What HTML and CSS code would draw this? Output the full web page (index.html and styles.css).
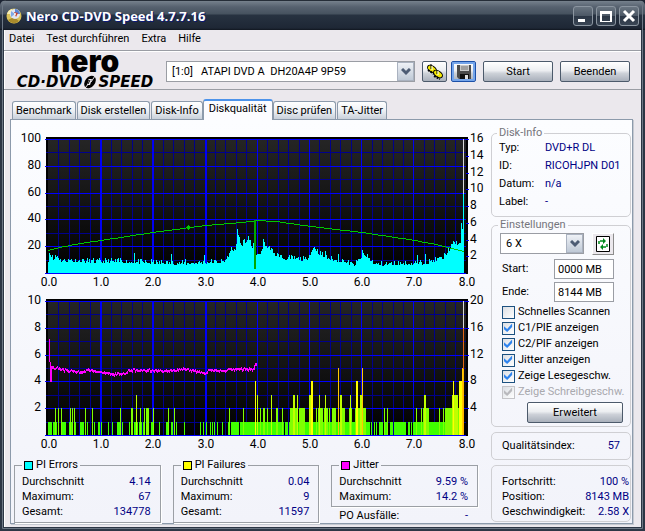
FILE: index.html
```html
<!DOCTYPE html>
<html lang="de">
<head>
<meta charset="utf-8">
<title>Nero CD-DVD Speed 4.7.7.16</title>
<link rel="stylesheet" href="styles.css">
</head>
<body>
<div class="window">
  <header class="titlebar">
    <svg class="app-icon" viewBox="0 0 16 16" aria-hidden="true">
      <circle cx="8" cy="8" r="7.5" fill="#d9c25a"/>
      <path d="M1 6a7 7 0 0 1 5-5l1 5z" fill="#f6efb8"/>
      <path d="M2 12a7 7 0 0 0 11 1l-5-4z" fill="#a98b2c"/>
      <circle cx="9" cy="6" r="5" fill="#dfe6f2"/>
      <path d="M9 1a5 5 0 0 1 5 5H9z" fill="#5b86d8"/>
      <path d="M5 3l4 3-4 3z" fill="#7fa9e6"/>
      <path d="M8 4l4 1-2 4z" fill="#c9442c"/>
      <circle cx="9" cy="6" r="1" fill="#fff"/>
    </svg>
    <h1>Nero CD-DVD Speed 4.7.7.16</h1>
    <div class="window-buttons">
      <button type="button" aria-label="Minimieren"><svg viewBox="0 0 18 18"><path d="M4 12h7v3H4z" fill="#fff"/></svg></button>
      <button type="button" aria-label="Maximieren"><svg viewBox="0 0 18 18"><path d="M3 4h12v11H3zM5 7v7h8V7z" fill="#fff" fill-rule="evenodd"/></svg></button>
      <button type="button" aria-label="Schließen"><svg viewBox="0 0 18 18"><path d="M4 4l10 10M14 4L4 14" stroke="#fff" stroke-width="3"/></svg></button>
    </div>
  </header>

  <nav class="menu">
    <a href="#datei">Datei</a><a href="#test">Test durchführen</a><a href="#extra">Extra</a><a href="#hilfe">Hilfe</a>
  </nav>

  <div class="toolbar">
    <div class="logo">
      <span class="logo-nero">nero</span>
      <span class="logo-speed">CD·DVD<svg viewBox="0 0 16 14" aria-hidden="true"><ellipse cx="8" cy="7" rx="5" ry="7" transform="rotate(38 8 7)" fill="#000"/><path d="M3 13L8 7M9 7l4-6" stroke="#ebe8ed"/><path d="M6 4h4l-2 6H5l2-5z" fill="#ebe8ed"/><path d="M8 5l-2 4" stroke="#000"/></svg>SPEED</span>
    </div>
    <div class="combo drive">
      <select aria-label="Laufwerk"><option>[1:0] &nbsp; ATAPI DVD A &nbsp;DH20A4P 9P59</option></select>
      <span class="arrow"><svg viewBox="0 0 10 8"><path d="M1 1l4 4 4-4" /></svg></span>
    </div>
    <button type="button" class="button icon-button" aria-label="Optionen">
      <svg viewBox="0 0 18 16"><g fill="#f4e800" stroke="#000"><ellipse cx="6" cy="5" rx="5" ry="3" transform="rotate(35 6 5)"/><ellipse cx="12" cy="10" rx="5" ry="3" transform="rotate(35 12 10)"/></g><path d="M2 6l6 4M8 12l6 3" stroke="#000" stroke-width="2" stroke-dasharray="2 1"/><path d="M5 0v5M11 6v4" stroke="#000"/><path d="M6 2v4M12 7v4" stroke="#fff"/></svg>
    </button>
    <button type="button" class="button icon-button focused" aria-label="Speichern">
      <svg viewBox="0 0 18 16"><path d="M2 1h14v14H4l-2-2z" fill="#4b4b4b"/><path d="M5 1h9v6H5z" fill="#c9c9c9"/><path d="M6 3h7M6 5h7" stroke="#777"/><path d="M5 10h9v5H5z" fill="#111"/><path d="M10 11h3v4h-3z" fill="#ddd"/></svg>
    </button>
    <button type="button" class="button wide">Start</button>
    <button type="button" class="button wide">Beenden</button>
  </div>

  <div class="tabs" role="tablist">
    <button type="button" role="tab">Benchmark</button>
    <button type="button" role="tab">Disk erstellen</button>
    <button type="button" role="tab">Disk-Info</button>
    <button type="button" role="tab" aria-selected="true">Diskqualität</button>
    <button type="button" role="tab">Disc prüfen</button>
    <button type="button" role="tab">TA-Jitter</button>
  </div>

  <main class="panel">
    <section class="results">
      <svg class="chart" id="chart-pie" viewBox="0 0 474 162" role="img" aria-label="PI Errors"></svg>
      <svg class="chart" id="chart-pif" viewBox="0 0 474 162" role="img" aria-label="PI Failures und Jitter"></svg>
      <div class="stats">
        <fieldset class="stat">
          <legend><i class="swatch pie"></i>PI Errors</legend>
          <dl><dt>Durchschnitt</dt><dd>4.14</dd><dt>Maximum:</dt><dd>67</dd><dt>Gesamt:</dt><dd>134778</dd></dl>
        </fieldset>
        <fieldset class="stat">
          <legend><i class="swatch pif"></i>PI Failures</legend>
          <dl><dt>Durchschnitt</dt><dd>0.04</dd><dt>Maximum:</dt><dd>9</dd><dt>Gesamt:</dt><dd>11597</dd></dl>
        </fieldset>
        <div>
          <fieldset class="stat">
            <legend><i class="swatch jitter"></i>Jitter</legend>
            <dl><dt>Durchschnitt</dt><dd>9.59 %</dd><dt>Maximum:</dt><dd>14.2 %</dd></dl>
          </fieldset>
          <dl class="po"><dt>PO Ausfälle:</dt><dd>-</dd></dl>
        </div>
      </div>
    </section>

    <aside class="side">
      <fieldset class="group info">
        <legend>Disk-Info</legend>
        <dl><dt>Typ:</dt><dd>DVD+R DL</dd><dt>ID:</dt><dd>RICOHJPN D01</dd><dt>Datum:</dt><dd>n/a</dd><dt>Label:</dt><dd>-</dd></dl>
      </fieldset>
      <fieldset class="group settings">
        <legend>Einstellungen</legend>
        <div class="speed-row">
          <div class="combo"><select aria-label="Geschwindigkeit"><option>6 X</option></select><span class="arrow"><svg viewBox="0 0 10 8"><path d="M1 1l4 4 4-4"/></svg></span></div>
          <button type="button" class="refresh" aria-label="Aktualisieren"><svg viewBox="0 0 14 16"><path d="M.5.5h13v15H.5z" fill="#fff" stroke="#000"/><path d="M3 8V5h4M11 8v3H7" fill="none" stroke="#008a1c" stroke-width="1.5" stroke-dasharray="3 1"/><path d="M7 2l3 3-3 3zM7 8v6l-3-3z" fill="#008a1c"/></svg></button>
        </div>
        <div class="field"><label for="start">Start:</label><input id="start" type="text" value="0000 MB"></div>
        <div class="field"><label for="ende">Ende:</label><input id="ende" type="text" value="8144 MB"></div>
        <div class="checks">
          <label><input type="checkbox">Schnelles Scannen</label>
          <label><input type="checkbox" checked>C1/PIE anzeigen</label>
          <label><input type="checkbox" checked>C2/PIF anzeigen</label>
          <label><input type="checkbox" checked>Jitter anzeigen</label>
          <label><input type="checkbox" checked>Zeige Lesegeschw.</label>
          <label class="disabled"><input type="checkbox" checked disabled>Zeige Schreibgeschw.</label>
        </div>
        <button type="button" class="button advanced">Erweitert</button>
      </fieldset>
      <div class="group quality"><dl><dt>Qualitätsindex:</dt><dd>57</dd></dl></div>
      <div class="group progress"><dl><dt>Fortschritt:</dt><dd>100 %</dd><dt>Position:</dt><dd>8143 MB</dd><dt>Geschwindigkeit:</dt><dd>2.58 X</dd></dl></div>
    </aside>
  </main>
</div>
<script src="charts.js"></script>
</body>
</html>
```
FILE: charts.js
```js
const NS = "http://www.w3.org/2000/svg";
const LEFT = 37, RIGHT = 455, TOP = 11, BOTTOM = 145;

function add(svg, name, attrs, text) {
  const el = document.createElementNS(NS, name);
  for (const key in attrs) el.setAttribute(key, attrs[key]);
  if (text !== undefined) el.textContent = text;
  svg.appendChild(el);
}

function rect(svg, x, y, width, height, fill) {
  add(svg, "rect", { x, y, width, height, fill });
}

// Background, grid and axis labels shared by both charts.
function drawFrame(svg, id, leftLabels, rightLabels) {
  add(svg, "defs", {});
  svg.firstChild.innerHTML = `<linearGradient id="${id}" x2="0" y2="1"><stop stop-color="#252525"/><stop offset="1" stop-color="#000"/></linearGradient>`;
  rect(svg, 35, 9, 422, 137, "#000");
  rect(svg, LEFT, TOP, RIGHT - LEFT, BOTTOM - TOP, `url(#${id})`);
  for (let i = 1; i < 40; i++) {
    if (i % 5) rect(svg, Math.round(LEFT + i * 10.44), TOP, 1, BOTTOM - TOP, "#00008c");
  }
  for (let i = 1; i < 10; i += 2) rect(svg, 35, Math.round(TOP + i * 13.4), 420, 1, "#00008c");
  for (let i = 1; i < 8; i++) rect(svg, Math.round(LEFT + i * 52.2), TOP, i < 4 ? 2 : 1, BOTTOM - TOP, "#0000f5");
  for (let i = 0; i <= 5; i++) rect(svg, 34, Math.round(TOP + i * 26.8), 421, 1, "#0000ff");
  leftLabels.forEach((label, i) => {
    add(svg, "text", { x: 30, y: Math.round(14 + i * 26.8), "text-anchor": "end" }, label);
  });
  const step = 134 / rightLabels.length;
  rightLabels.forEach((label, i) => {
    const y = Math.round(TOP + i * step);
    rect(svg, 455, y, 3, 1, "#0000ff");
    add(svg, "text", { x: 459, y: y + 3 }, label);
  });
  for (let i = 0; i <= 8; i++) {
    add(svg, "text", { x: Math.round(38 + i * 52.2), y: 158, "text-anchor": "middle" }, i + ".0");
  }
}

function interpolate(points, x) {
  for (let i = 1; i < points.length; i++) {
    const [x0, y0] = points[i - 1], [x1, y1] = points[i];
    if (x <= x1) return y0 + (y1 - y0) * (x - x0) / (x1 - x0);
  }
  return points[points.length - 1][1];
}

let seed = 11;
function noise() {
  seed = (seed * 16807) % 2147483647;
  return seed / 2147483647;
}

const pie = document.getElementById("chart-pie");
drawFrame(pie, "bg-pie", [100, 80, 60, 40, 20], [16, 14, 12, 10, 8, 6, 4, 2]);

const pieLevel = [[37,12],[38,20],[40,17],[42,13],[46,17],[49,12],[60,12],[80,11],[110,11],[140,10],[170,9],[190,10],[213,11],[216,15],[219,20],[220,27],[221,21],[224,24],[225,26],[226,42],[227,34],[229,31],[231,27],[232,33],[234,28],[237,36],[239,29],[241,26],[243,34],[245,19],[248,16],[251,25],[252,31],[256,25],[260,24],[262,18],[266,18],[273,14],[285,14],[295,12],[300,21],[303,26],[307,20],[315,15],[325,12],[332,12],[341,8],[344,8],[351,17],[356,16],[364,8],[390,9],[410,9],[420,11],[432,15],[437,22],[443,30],[449,28],[450,46],[452,44]];
const piePeaks = { 44: 18, 60: 14, 72: 14, 109: 15, 123: 20, 160: 19, 174: 14, 193: 18, 226: 44, 314: 22, 327: 19, 351: 23, 356: 19, 406: 18, 414: 19, 430: 16 };
for (let x = 37; x < 453; x++) {
  const height = piePeaks[x] || Math.round(interpolate(pieLevel, x) + Math.pow(noise(), 2) * 5 - 1);
  rect(pie, x, BOTTOM - height, 1, height, "#00ffff");
}
rect(pie, 452, 11, 1, 55, "#d8d8d8");
rect(pie, 452, 66, 1, 79, "#00ffff");

const speed = [[37,122],[39,121],[62,116],[89,112],[141,104],[193,97],[229,94],[246,92],[264,93],[299,98],[350,104],[403,112],[429,117],[452,123]];
for (let x = 37; x < 452; x += 2) rect(pie, x, Math.round(interpolate(speed, x)), 2, 1, "#00c800");
rect(pie, 243, 92, 2, 49, "#00a800");
rect(pie, 177, 97, 1, 5, "#00c800");
rect(pie, 176, 98, 3, 3, "#00c800");

const pif = document.getElementById("chart-pif");
drawFrame(pif, "bg-pif", [10, 8, 6, 4, 2], [20, 16, 12, 8, 4]);

// Runs of columns: [first column, width, PI failures].
const runs = [[37,4,1],[42,4,1],[50,5,1],[58,3,1],[63,2,1],[69,4,1],[76,1,1],[83,1,1],[87,2,1],[90,1,1],[97,1,1],[101,1,1],[106,4,1],[111,1,1],[118,1,1],[123,4,1],[128,3,1],[132,2,1],[140,3,1],[148,1,1],[155,3,1],[160,2,1],[165,1,1],[173,1,1],[189,1,1],[192,1,1],[195,1,1],[199,1,1],[201,1,1],[203,1,1],[206,1,1],[211,1,1],[217,1,1],[220,8,1],[229,44,1],[274,3,1],[278,77,1],[355,4,1],[360,1,1],[363,1,1],[365,1,1],[368,4,1],[373,4,1],[379,3,1],[383,12,1],[397,2,1],[400,1,1],[402,51,1],
[44,1,2],[47,1,2],[50,1,2],[59,1,2],[61,1,2],[63,1,2],[74,1,2],[81,1,2],[109,1,2],[120,2,2],[129,1,2],[133,1,2],[135,3,2],[142,1,2],[157,1,2],[163,1,2],[218,1,2],[232,1,2],[249,1,2],[252,2,2],[256,1,2],[265,2,2],[271,1,2],[279,8,2],[288,6,2],[298,4,2],[305,1,2],[307,5,2],[313,4,2],[318,1,2],[321,4,2],[327,1,2],[331,3,2],[338,3,2],[344,11,2],[373,1,2],[376,1,2],[405,1,2],[410,1,2],[412,4,2],[416,2,2],[428,1,2],[432,1,2],[434,18,2],
[125,1,3],[246,1,3],[260,1,3],[282,2,3],[286,1,3],[298,2,3],[308,1,3],[314,1,3],[329,2,3],[339,1,3],[349,2,3],[413,2,3],[441,6,3],
[244,1,4],[300,2,4],[345,2,4],[442,1,4],[448,4,4],[327,1,5],[351,1,5],[451,1,5]];
const runColors = ["", "#40ff00", "#80ff00", "#bfff00", "#ffff00", "#ffc800"];
for (const [x, width, value] of runs) {
  const height = Math.round(value * 13.4);
  rect(pif, x, BOTTOM - height, width, height, runColors[value]);
}
rect(pif, 452, 11, 1, 27, "#d8d8d8");
rect(pif, 452, 38, 1, 41, "#e06414");
rect(pif, 452, 79, 1, 66, "#ffb400");

const jitter = [[41,77],[46,77],[54,79],[68,81],[78,79],[92,82],[104,83],[116,82],[117,79],[135,79],[155,80],[165,79],[172,78],[184,80],[195,83],[197,79],[216,80],[219,78],[240,78],[243,78]];
for (let x = 41; x < 243; x++) {
  rect(pif, x, Math.round(interpolate(jitter, x) + noise() * 2 - 1), 1, noise() > 0.6 ? 3 : 2, "#ff00ff");
}
rect(pif, 38, 49, 1, 23, "#ff00ff");
rect(pif, 39, 72, 1, 20, "#ff00ff");
rect(pif, 40, 76, 1, 16, "#ff00ff");
rect(pif, 243, 75, 1, 5, "#ff00ff");
rect(pif, 244, 73, 2, 3, "#ff00ff");
```
FILE: styles.css
```css
* { box-sizing: border-box; }

body {
  margin: 0;
  background: #1c2433;
  color: #000;
  font: 11px/16px Roboto, "Liberation Sans", sans-serif;
}

button, input, select { font: inherit; color: inherit; margin: 0; }
dl, dd { margin: 0; }
dd { color: #000084; }

.window {
  min-height: 100vh;
  display: flex;
  flex-direction: column;
  background: #ebe8ed;
  border: 4px solid #2c3645;
  border-top: 0;
  border-radius: 6px 6px 0 0;
  box-shadow: inset 1px 0 #fff;
  outline: 1px solid #6d7885;
  outline-offset: -3px;
}

.titlebar {
  display: flex;
  align-items: center;
  height: 30px;
  margin: 0 -4px;
  padding: 2px 6px 0;
  border-radius: 6px 6px 0 0;
  background: linear-gradient(#252d38 0 1px, #77828d 1px, #56616f 7px, #46525f 14px, #273241 15px, #1e2735 28px, #10161f);
}
.app-icon { width: 16px; height: 16px; margin-right: 4px; }
.titlebar h1 {
  flex: 1;
  margin: 0;
  color: #fff;
  font: bold 13px/20px "Open Sans", sans-serif;
  text-shadow: 1px 1px #0a1a78;
}
.window-buttons { display: flex; gap: 3px; }
.window-buttons button {
  width: 20px;
  height: 20px;
  padding: 0;
  border: 1px solid #8b95a0;
  border-radius: 3px;
  background: linear-gradient(#6a7581, #4b5765 50%, #2b3645 50%, #394554);
}
.window-buttons svg { display: block; width: 18px; height: 18px; }

.menu {
  display: flex;
  gap: 12px;
  height: 21px;
  padding: 1px 5px;
  border-bottom: 1px solid #9a9da4;
}
.menu a { color: #000; text-decoration: none; }

.toolbar {
  display: flex;
  align-items: center;
  height: 39px;
  padding: 2px 11px 0 8px;
  border-top: 1px solid #fff;
  border-bottom: 1px solid #9a9da4;
}
.logo { width: 154px; display: flex; flex-direction: column; align-items: center; gap: 7px; padding-right: 8px; }
.logo-nero { font: 900 30px/14px Inter, sans-serif; }
.logo-speed { display: flex; align-items: center; font: italic bold 15px/14px "DejaVu Sans", sans-serif; }
.logo-speed svg { width: 16px; height: 14px; }

.combo {
  display: flex;
  position: relative;
  height: 21px;
  border: 1px solid #9a9da4;
  background: #fff;
}
.combo select {
  appearance: none;
  flex: 1;
  min-width: 0;
  border: 0;
  padding: 0 20px 0 5px;
  background: transparent;
}
.combo .arrow {
  position: absolute;
  inset: 0 0 0 auto;
  width: 17px;
  display: grid;
  place-items: center;
  border: 1px solid #aab2c0;
  background: linear-gradient(#eef1f6, #bfc9d6);
  pointer-events: none;
}
.arrow svg { width: 10px; height: 8px; fill: none; stroke: #4d5c74; stroke-width: 3; }
.drive { flex: 1; margin-right: 7px; }

.button {
  height: 21px;
  padding: 0;
  border: 1px solid #4c5a6b;
  border-radius: 2px;
  background: linear-gradient(#fff, #eceef1 45%, #cdd1d8 60%, #a9b0bb);
  box-shadow: inset 0 1px #fff;
}
.icon-button { width: 25px; margin-right: 4px; display: grid; place-items: center; }
.icon-button svg { width: 18px; height: 16px; }
.focused { border-color: #1c50a8; box-shadow: inset 0 0 0 2px #75a5ea; }
.wide { width: 70px; margin-left: 3px; }
.wide + .wide { margin-left: 7px; }

.tabs { display: flex; align-items: flex-end; height: 29px; padding-left: 8px; }
.tabs button {
  height: 18px;
  padding: 0 3px;
  margin-right: 1px;
  border: 1px solid #8c9aab;
  border-bottom: 0;
  border-radius: 3px 3px 0 0;
  background: linear-gradient(#fff, #eef1f5 50%, #c9d0da);
  white-space: nowrap;
}
.tabs [aria-selected] {
  position: relative;
  height: 21px;
  margin: 0 0 -1px -1px;
  padding: 0 5px 3px;
  border-top: 2px solid #4d93ea;
  background: #fcfcff;
}

.panel {
  flex: 1;
  display: grid;
  grid-template-columns: minmax(0, 1fr) 140px;
  gap: 6px;
  margin: 0 8px 3px 6px;
  padding-right: 1px;
  border: 1px solid #8c9aab;
  background: linear-gradient(#fcfdff, #f2f3fa);
  box-shadow: 1px 1px #c5c9d1;
}

.results { padding-top: 8px; }
.chart { display: block; width: 100%; shape-rendering: crispEdges; font-size: 12px; }

.stats {
  display: grid;
  grid-template-columns: repeat(3, 1fr);
  gap: 12px;
  padding: 5px 7px 0 3px;
}
.stat {
  margin: 0;
  min-width: 0;
  padding: 1px 9px 2px 7px;
  border: 1px solid #9b9fa5;
  box-shadow: 1px 1px #fff;
}
.stat legend { display: flex; align-items: center; padding: 0 2px; }
.swatch { flex: none; width: 9px; height: 9px; margin-right: 3px; border: 1px solid #000; }
.pie { background: #00ffff; }
.pif { background: #ffff00; }
.jitter { background: #ff00ff; }
.stats dl { display: grid; grid-template-columns: 1fr auto; line-height: 15px; }
.stats dd, .quality dd, .progress dd { text-align: right; }
.po { padding: 1px 10px 0 8px; }

.side { display: flex; flex-direction: column; padding-top: 5px; }
.group {
  margin: 0;
  min-width: 0;
  padding: 0 10px;
  border: 1px solid #cfcfd3;
  border-radius: 5px;
}
.group legend { color: #75757c; padding: 0 2px; margin-left: -2px; }
.info { height: 92px; padding-left: 7px; }
.info dl { display: grid; grid-template-columns: 46px 1fr; line-height: 18px; white-space: nowrap; margin-top: -2px; }
.settings { padding: 0 7px 3px 8px; }
.speed-row { display: flex; gap: 8px; margin-bottom: 4px; }
.speed-row .combo { width: 84px; }
.refresh {
  width: 22px;
  height: 22px;
  padding: 0;
  display: grid;
  place-items: center;
  border: 1px solid;
  border-color: #fff #8c8c8c #8c8c8c #fff;
  background: #ebe8ed;
}
.refresh svg { width: 14px; height: 16px; }
.field { display: flex; align-items: center; justify-content: space-between; margin-bottom: 3px; padding: 0 9px 0 2px; }
.field input { width: 60px; height: 20px; padding: 0 3px; border: 1px solid #9a9da4; background: #fff; }
.checks { padding: 0 0 0 2px; margin-top: -1px; }
.checks label { display: flex; align-items: center; gap: 3px; height: 16px; white-space: nowrap; }
.checks input {
  appearance: none;
  flex: none;
  width: 13px;
  height: 13px;
  margin: 0;
  border: 1px solid #1c5180;
  background: linear-gradient(135deg, #dcdfe4, #fff);
}
.checks input:checked::before {
  content: "";
  display: block;
  width: 9px;
  height: 9px;
  margin: 1px;
  background: #2f84ee;
  clip-path: polygon(0 30%, 35% 60%, 90% 0, 90% 40%, 35% 95%, 0 65%);
}
.checks .disabled { color: #a9a9ae; }
.checks input:disabled { border-color: #c4c4c8; }
.checks input:disabled::before { background: #b9b9bd; }
.advanced { display: block; width: 96px; margin: 2px 0 0 auto; }
.quality, .progress { margin-top: 5px; }
.quality { padding-top: 5px; padding-bottom: 5px; }
.progress { padding-top: 8px; padding-bottom: 2px; }
.quality dl, .progress dl { display: grid; grid-template-columns: 1fr auto; white-space: nowrap; }
.progress dl { line-height: 15px; }
```
